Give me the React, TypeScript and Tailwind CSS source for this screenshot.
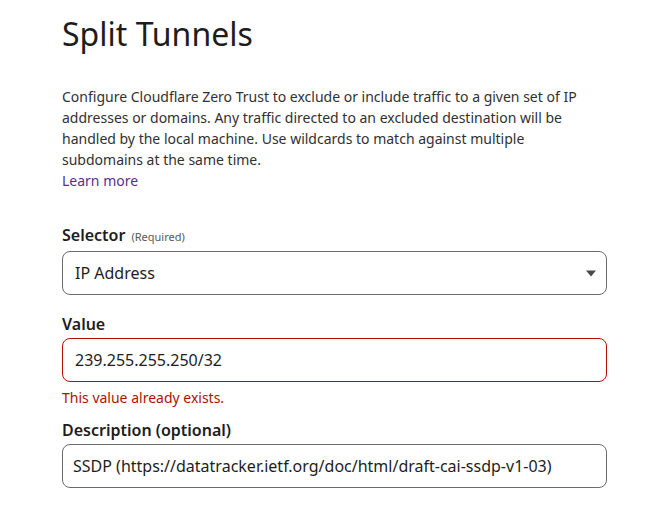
import React from "react";

function Field({
  label,
  hint,
  children,
}: {
  label: string;
  hint?: string;
  children: React.ReactNode;
}) {
  return (
    <div className="flex flex-col">
      <label className="text-[16px] leading-[22px] font-semibold text-[#1d1d1d] mb-[3px]">
        {label}
        {hint && (
          <span className="ml-[6px] text-[11px] font-normal text-[#595959]">{hint}</span>
        )}
      </label>
      {children}
    </div>
  );
}

export default function App() {
  return (
    <div
      className="min-h-screen bg-white pl-[62px] pt-[12px] text-[#1d1d1d]"
      style={{ fontFamily: '"Noto Sans", "Open Sans", sans-serif' }}
    >
      <div className="w-[545px]">
        <h1 className="text-[32px] leading-[44px] font-normal text-[#1d1d1d]">Split Tunnels</h1>

        <p className="mt-[30px] text-[14px] leading-[21px] text-[#313131]">
          Configure Cloudflare Zero Trust to exclude or include traffic to a given set of IP
          addresses or domains. Any traffic directed to an excluded destination will be
          handled by the local machine. Use wildcards to match against multiple
          subdomains at the same time.
          <br />
          <a href="#" className="text-[#5c2d91]">
            Learn more
          </a>
        </p>

        <div className="mt-[33px] flex flex-col">
          <Field label="Selector" hint="(Required)">
            <div className="relative flex h-[44px] items-center rounded-[8px] border border-[#6b6b6b] px-[12px]">
              <span className="text-[16px] text-[#1d1d1d]">IP Address</span>
              <svg
                className="absolute right-[9px] top-[18px]"
                width="12"
                height="7"
                viewBox="0 0 12 7"
              >
                <path d="M1 0.5 H11 L6 6.5 Z" fill="#4a4a4a" />
              </svg>
            </div>
          </Field>

          <div className="mt-[18px]">
            <Field label="Value">
              <div className="flex h-[44px] items-center rounded-[8px] border border-[#b20f03] px-[12px]">
                <span className="text-[16px] text-[#1d1d1d]">239.255.255.250/32</span>
              </div>
              <span className="mt-[6px] text-[14px] leading-[20px] text-[#b20f03]">
                This value already exists.
              </span>
            </Field>
          </div>

          <div className="mt-[11px]">
            <Field label="Description (optional)">
              <div className="flex h-[44px] items-center rounded-[8px] border border-[#6b6b6b] px-[10px]">
                <span className="text-[16px] text-[#1d1d1d]">
                  SSDP (https://datatracker.ietf.org/doc/html/draft-cai-ssdp-v1-03)
                </span>
              </div>
            </Field>
          </div>
        </div>
      </div>
    </div>
  );
}
